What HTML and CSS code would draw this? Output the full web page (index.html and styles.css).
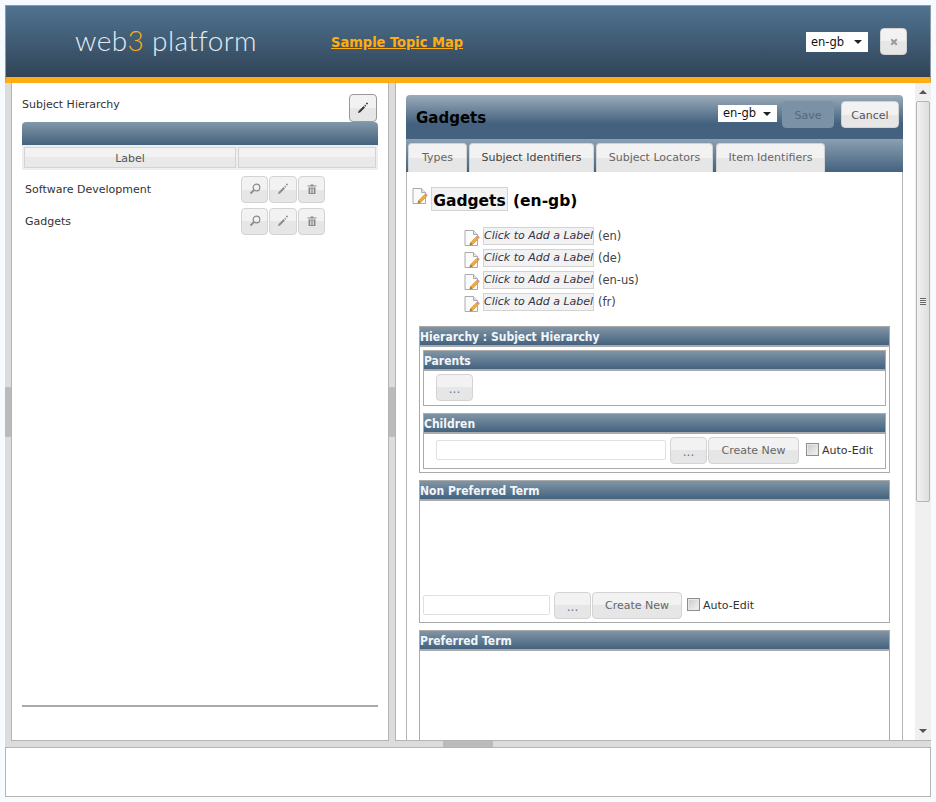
FILE: index.html
```html
<!DOCTYPE html>
<html lang="en">
<head>
  <meta charset="UTF-8">
  <title>web3 platform</title>
  <link rel="stylesheet" href="styles.css">
</head>
<body>

  <svg class="defs" width="0" height="0">
    <symbol id="i-search" viewBox="0 0 12 12">
      <circle cx="7.500" cy="4.500" r="3.300" fill="none" stroke="currentColor" stroke-width="1.200"/>
      <path d="M5.100 6.900 1.500 10.500" stroke="currentColor" stroke-width="1.800" fill="none"/>
    </symbol>
    <symbol id="i-pencil" viewBox="0 0 12 12">
      <path d="M1 11 1.600 9 6.600 4 8 5.400 3 10.400Z" fill="currentColor"/>
      <path d="M7.300 3.300 8 2.600 9.400 4 8.700 4.700Z" fill="currentColor"/>
      <path d="M10 .5v2M9 1.500h2" stroke="currentColor" stroke-width=".8"/>
    </symbol>
    <symbol id="i-trash" viewBox="0 0 12 12">
      <path d="M1.500 2.500h9v1h-9zM4.500 1.500h3v1h-3z" fill="currentColor"/>
      <path d="M2.500 4.500h7v6.500h-7z" fill="currentColor"/>
      <path d="M4.500 5.500v4.500M6 5.500v4.500M7.500 5.500v4.500" stroke="#eee" stroke-width=".7"/>
    </symbol>
    <symbol id="i-close" viewBox="0 0 10 10">
      <path d="M1.500 1.500 8.500 8.500M8.500 1.500 1.500 8.500" stroke="currentColor" stroke-width="2.400"/>
    </symbol>
    <symbol id="i-note" viewBox="0 0 17 18">
      <path d="M1 1.500h8.500l4 4v11H1z" fill="#fbfbfb" stroke="#aaa"/>
      <path d="M9.500 1.500v4h4" fill="#e6e6e6" stroke="#aaa"/>
      <path d="M5.800 16 6.600 13.400 12.600 7.400 14.600 9.400 8.600 15.400Z" fill="#f3ac2c" stroke="#b98a3a" stroke-width=".5"/>
      <path d="M12.600 7.400 13.800 6.200 15.800 8.200 14.600 9.400Z" fill="#c88fc6"/>
      <path d="M5.800 16 6.600 13.400 8.600 15.400Z" fill="#8a7658"/>
    </symbol>
  </svg>

  <header class="top">
    <div class="logo">web<span class="logo-3">3</span> platform</div>
    <a class="map-link" href="#">Sample Topic Map</a>
    <div class="top-right">
      <select class="lang">
        <option>en-gb</option>
      </select>
      <button class="btn btn-close" type="button"><svg class="ico-close"><use href="#i-close"/></svg></button>
    </div>
  </header>

  <div class="layout">
    <div class="side-toggle"><span></span></div>

    <aside class="west">
      <div class="west-head">
        <span class="west-title">Subject Hierarchy</span>
        <button class="btn btn-edit" type="button"><svg class="ico ico-dark"><use href="#i-pencil"/></svg></button>
      </div>
      <div class="grid-bar"></div>
      <div class="grid-cols">
        <div class="grid-col grid-col-label">Label</div>
        <div class="grid-col grid-col-actions"></div>
      </div>
      <div class="grid-row">
        <div class="grid-label">Software Development</div>
        <div class="actions">
          <button class="btn btn-icon" type="button"><svg class="ico"><use href="#i-search"/></svg></button>
          <button class="btn btn-icon" type="button"><svg class="ico"><use href="#i-pencil"/></svg></button>
          <button class="btn btn-icon" type="button"><svg class="ico"><use href="#i-trash"/></svg></button>
        </div>
      </div>
      <div class="grid-row">
        <div class="grid-label">Gadgets</div>
        <div class="actions">
          <button class="btn btn-icon" type="button"><svg class="ico"><use href="#i-search"/></svg></button>
          <button class="btn btn-icon" type="button"><svg class="ico"><use href="#i-pencil"/></svg></button>
          <button class="btn btn-icon" type="button"><svg class="ico"><use href="#i-trash"/></svg></button>
        </div>
      </div>
      <div class="grid-end"></div>
    </aside>

    <div class="side-toggle"><span></span></div>

    <main class="east">
      <div class="scroller">
        <section class="dialog">
          <div class="dialog-title">
            <h1>Gadgets</h1>
            <select class="lang lang-small">
              <option>en-gb</option>
            </select>
            <button class="btn btn-save" type="button">Save</button>
            <button class="btn btn-cancel" type="button">Cancel</button>
          </div>
          <div class="tabs">
            <a class="tab tab-types" href="#">Types</a>
            <a class="tab tab-si is-active" href="#">Subject Identifiers</a>
            <a class="tab tab-sl" href="#">Subject Locators</a>
            <a class="tab tab-ii" href="#">Item Identifiers</a>
          </div>

          <div class="dialog-body">
            <div class="main-label">
              <svg class="note"><use href="#i-note"/></svg>
              <span class="main-text">Gadgets</span>
              <span class="main-lang">(en-gb)</span>
            </div>

            <ul class="labels">
              <li><svg class="note"><use href="#i-note"/></svg><em>Click to Add a Label</em> (en)</li>
              <li><svg class="note"><use href="#i-note"/></svg><em>Click to Add a Label</em> (de)</li>
              <li><svg class="note"><use href="#i-note"/></svg><em>Click to Add a Label</em> (en-us)</li>
              <li><svg class="note"><use href="#i-note"/></svg><em>Click to Add a Label</em> (fr)</li>
            </ul>

            <div class="panel panel-hierarchy">
              <div class="panel-head">Hierarchy : Subject Hierarchy</div>
              <div class="panel panel-inner panel-parents">
                <div class="panel-head">Parents</div>
                <div class="inner-row">
                  <button class="btn btn-dots" type="button">...</button>
                </div>
              </div>
              <div class="panel panel-inner panel-children">
                <div class="panel-head">Children</div>
                <div class="inner-row">
                  <input class="text-input input-wide" type="text">
                  <button class="btn btn-dots" type="button">...</button>
                  <button class="btn btn-create" type="button">Create New</button>
                  <label class="auto-edit"><input type="checkbox">Auto-Edit</label>
                </div>
              </div>
            </div>

            <div class="panel panel-npt">
              <div class="panel-head">Non Preferred Term</div>
              <div class="npt-row">
                <input class="text-input input-short" type="text">
                <button class="btn btn-dots" type="button">...</button>
                <button class="btn btn-create" type="button">Create New</button>
                <label class="auto-edit"><input type="checkbox">Auto-Edit</label>
              </div>
            </div>

            <div class="panel panel-pt">
              <div class="panel-head">Preferred Term</div>
            </div>
          </div>
        </section>
      </div>

      <div class="scrollbar">
        <span class="arrow arrow-up"></span>
        <div class="thumb"><span class="grip"></span></div>
        <span class="arrow arrow-down"></span>
      </div>
    </main>
  </div>

  <div class="south-toggle"><span></span></div>
  <footer class="south"></footer>

</body>
</html>
```

FILE: styles.css
```css
* {
  box-sizing: border-box;
}

html, body {
  height: 802px;
  overflow: hidden;
}

body {
  margin: 0;
  padding: 5px;
  display: flex;
  flex-direction: column;
  background: #f6fbff;
  font-family: 'DejaVu Sans', Verdana, sans-serif;
  font-size: 11px;
  color: #333;
}

.defs {
  position: absolute;
}

/* buttons */
.btn {
  border: 1px solid #d3d3d3;
  border-radius: 4px;
  background: linear-gradient(to bottom, #f2f2f2 50%, #e6e6e6 50%);
  color: #555;
  font-family: inherit;
  font-size: 11px;
  padding: 0;
  display: flex;
  align-items: center;
  justify-content: center;
}

.ico {
  width: 12px;
  height: 12px;
  color: #8a8a8a;
}

.ico-dark {
  color: #333;
}

.ico-close {
  width: 8px;
  height: 8px;
  color: #999;
}

.note {
  width: 17px;
  height: 18px;
  flex: none;
}

/* top header */
.top {
  height: 78px;
  flex: none;
  display: flex;
  align-items: center;
  background: linear-gradient(to bottom, #4f7390, #314457);
  border: 1px solid #8d9aa6;
  border-bottom: 6px solid #ffad12;
}

.logo {
  margin: -4px 0 0 69px;
  width: 256px;
  color: #e4ecf2;
  font-family: Lato, sans-serif;
  font-weight: 300;
  font-size: 28px;
  letter-spacing: .4px;
}

.logo-3 {
  color: #ffad12;
}

.map-link {
  color: #ffad12;
  font-family: 'DejaVu Sans Condensed', 'DejaVu Sans', sans-serif;
  font-weight: bold;
  font-size: 14.500px;
}

.top-right {
  margin-left: auto;
  margin-right: 23px;
  display: flex;
  align-items: center;
  gap: 12px;
}

.lang {
  appearance: none;
  width: 62px;
  height: 20px;
  border: none;
  border-radius: 0;
  background: #fff url("data:image/svg+xml,%3Csvg xmlns='http://www.w3.org/2000/svg' width='8' height='4'%3E%3Cpath d='M0 0h8L4 4z' fill='%23222'/%3E%3C/svg%3E") no-repeat right 6px center;
  font-family: inherit;
  font-size: 11.500px;
  color: #111;
  padding-left: 5px;
}

.lang-small {
  width: 59px;
  height: 17px;
  padding-bottom: 2px;
}

.btn-close {
  width: 27px;
  height: 27px;
}

/* main area */
.layout {
  flex: 1;
  min-height: 0;
  display: flex;
  background: #dcdcdc;
}

.side-toggle {
  width: 6px;
  flex: none;
  display: flex;
  align-items: center;
}

.side-toggle span {
  display: block;
  width: 100%;
  height: 50px;
  background: #bbb;
}

/* left pane */
.west {
  width: 378px;
  flex: none;
  background: #fff;
  border: 1px solid #b4b4b4;
  border-top: none;
  padding: 11px 10px 0;
  display: flex;
  flex-direction: column;
}

.west-head {
  height: 28px;
  display: flex;
  justify-content: space-between;
}

.west-title {
  margin-top: 4px;
}

.btn-edit {
  width: 28px;
  height: 28px;
  margin-right: 1px;
  border-color: #999;
}

.grid-bar {
  height: 23px;
  background: linear-gradient(to bottom, #8397a8, #44627f);
  border-radius: 4px 4px 0 0;
}

.grid-cols {
  display: flex;
  gap: 2px;
  padding: 2px;
  height: 25px;
  background: #eee;
}

.grid-col {
  border: 1px solid #d3d3d3;
  background: linear-gradient(to bottom, #f2f2f2 50%, #e9e9e9 50%);
  text-align: center;
  line-height: 21px;
  color: #555;
}

.grid-col-label {
  width: 212px;
}

.grid-col-actions {
  flex: 1;
}

.grid-row {
  display: flex;
  align-items: center;
  height: 32px;
  padding-left: 3px;
}

.grid-cols + .grid-row {
  margin-top: 3px;
}

.grid-label {
  width: 216px;
}

.actions {
  display: flex;
  gap: 1px;
}

.btn-icon {
  width: 27px;
  height: 27px;
}

.btn-icon:nth-child(2) {
  width: 28px;
}

.grid-end {
  margin-top: 468px;
  height: 2px;
  background: #aaa;
}

/* right pane */
.east {
  flex: 1;
  min-width: 0;
  display: flex;
  background: #fff;
  border-left: 1px solid #b4b4b4;
  border-bottom: 1px solid #b4b4b4;
}

.scroller {
  flex: 1;
  min-width: 0;
  overflow: hidden;
  padding: 12px 12px 0 10px;
}

.dialog-title {
  height: 44px;
  display: flex;
  align-items: flex-start;
  background: linear-gradient(to bottom, #9bacba, #44627f 65%);
  border-radius: 4px 4px 0 0;
}

.dialog-title h1 {
  margin: 14px auto 0 10px;
  font-size: 15px;
  color: #000;
}

.dialog-title .lang {
  margin-top: 10px;
}

.btn-save, .btn-cancel {
  margin-top: 6px;
  height: 27px;
  font-size: 11px;
  padding-top: 2px;
}

.btn-save {
  width: 52px;
  margin-left: 5px;
  background: #7b92a6;
  border-color: #7b92a6;
  color: #52697e;
}

.btn-cancel {
  width: 58px;
  margin: 6px 4px 0 7px;
}

.tabs {
  height: 33px;
  display: flex;
  align-items: flex-end;
  padding-left: 2px;
  background: linear-gradient(to bottom, #8ba0b1, #44627f);
}

.tab {
  height: 29px;
  border: 1px solid #d3d3d3;
  border-bottom: none;
  border-radius: 4px 4px 0 0;
  background: linear-gradient(to bottom, #f2f2f2 50%, #e6e6e6 50%);
  color: #666;
  text-decoration: none;
  text-align: center;
  line-height: 28px;
}

.tab.is-active {
  color: #444;
}

.tab-types {
  width: 59px;
  margin-right: 2px;
}

.tab-si {
  width: 125px;
  margin-right: 2px;
}

.tab-sl {
  width: 117px;
  margin-right: 3px;
}

.tab-ii {
  width: 109px;
}

.dialog-body {
  border: 1px solid #b4b4b4;
  border-top: none;
  background: #fff;
  height: 600px;
  padding: 15px 12px 0;
}

.main-label {
  display: flex;
  align-items: flex-start;
  height: 24px;
  margin-left: -7px;
  color: #000;
  font-weight: bold;
  font-size: 15.500px;
}

.main-text {
  margin-left: 2px;
  height: 24px;
  width: 77px;
  border: 1px solid #d3d3d3;
  background: #f2f2f2;
  text-align: center;
  line-height: 26px;
}

.main-lang {
  margin-left: 5px;
  line-height: 28px;
}

.labels {
  list-style: none;
  margin: 14px 0 0 45px;
  padding: 0;
}

.labels li {
  height: 22px;
  display: flex;
  align-items: center;
  gap: 3px;
  color: #444;
  font-size: 11.500px;
}

.labels .note {
  margin-top: 4px;
  margin-right: -1px;
}

.labels em {
  width: 111px;
  height: 18px;
  margin-right: 1px;
  border: 1px solid #d3d3d3;
  background: #f2f2f2;
  color: #334;
  font-size: 11px;
  text-align: center;
  line-height: 16px;
  white-space: nowrap;
}

.panel {
  border: 1px solid #aaa;
  background: #fff;
}

.panel-head {
  height: 20px;
  background: linear-gradient(to bottom, #8095a6, #44627f);
  border-bottom: 2px solid #aaa;
  color: #f2f6f9;
  font-family: 'DejaVu Sans Condensed', 'DejaVu Sans', sans-serif;
  font-weight: bold;
  font-size: 12px;
  line-height: 21px;
}

.panel-hierarchy {
  margin-top: 13px;
  height: 147px;
  padding: 0 3px;
}

.panel-hierarchy > .panel-head {
  margin: 0 -3px 3px;
}

.panel-inner + .panel-inner {
  margin-top: 7px;
}

.panel-parents, .panel-children {
  height: 56px;
}

.inner-row {
  display: flex;
  align-items: center;
  padding: 3px 0 0 12px;
}

.text-input {
  height: 20px;
  margin-bottom: 1px;
  border: 1px solid #dde1e6;
  border-radius: 2px;
  background: #fff;
}

.input-wide {
  width: 230px;
  margin-right: 4px;
}

.input-short {
  width: 127px;
  margin-right: 4px;
}

.btn-dots {
  width: 37px;
  height: 27px;
  padding-top: 3px;
  color: #5a7a9a;
  font-size: 12px;
  margin-right: 1px;
}

.btn-create {
  width: 91px;
  height: 27px;
  color: #666;
}

.auto-edit {
  display: flex;
  align-items: center;
  margin-left: 7px;
  color: #333;
}

.auto-edit input {
  appearance: none;
  width: 13px;
  height: 13px;
  margin: 0 3px 3px 0;
  border: 1px solid #8e8e8e;
  background: linear-gradient(135deg, #c9c9c9, #f4f4f4);
  box-shadow: inset 0 0 0 1px #e8e8e8;
}

.panel-npt {
  margin-top: 7px;
  height: 143px;
  display: flex;
  flex-direction: column;
}

.npt-row {
  margin-top: auto;
  padding: 0 0 3px 3px;
  display: flex;
  align-items: center;
}

.npt-row .btn-create {
  width: 90px;
}

.npt-row .auto-edit {
  margin-left: 5px;
}

.panel-pt {
  margin-top: 7px;
  height: 200px;
}

/* fake scrollbar, the reference has a native one */
.scrollbar {
  width: 16px;
  flex: none;
  background: #f0f0f0;
  display: flex;
  flex-direction: column;
  align-items: center;
}

.arrow {
  width: 0;
  height: 0;
  flex: none;
  border-left: 4px solid transparent;
  border-right: 4px solid transparent;
}

.arrow-up {
  margin: 7px 0 7px;
  border-bottom: 4px solid #555;
}

.arrow-down {
  margin: auto 0 7px;
  border-top: 4px solid #555;
}

.thumb {
  width: 14px;
  height: 401px;
  border: 1px solid #b5b5b5;
  border-radius: 2px;
  background: linear-gradient(to right, #f2f2f2, #dedede);
  display: flex;
  align-items: center;
  justify-content: center;
}

.grip {
  width: 6px;
  height: 7px;
  background: repeating-linear-gradient(to bottom, #666 0 1px, #eee 1px 2px);
}

/* south pane */
.south-toggle {
  height: 6px;
  flex: none;
  background: #dcdcdc;
  display: flex;
  justify-content: center;
}

.south-toggle span {
  display: block;
  width: 50px;
  height: 100%;
  background: #bbb;
}

.south {
  height: 50px;
  flex: none;
  background: #fff;
  border: 1px solid #b4b4b4;
}
```
